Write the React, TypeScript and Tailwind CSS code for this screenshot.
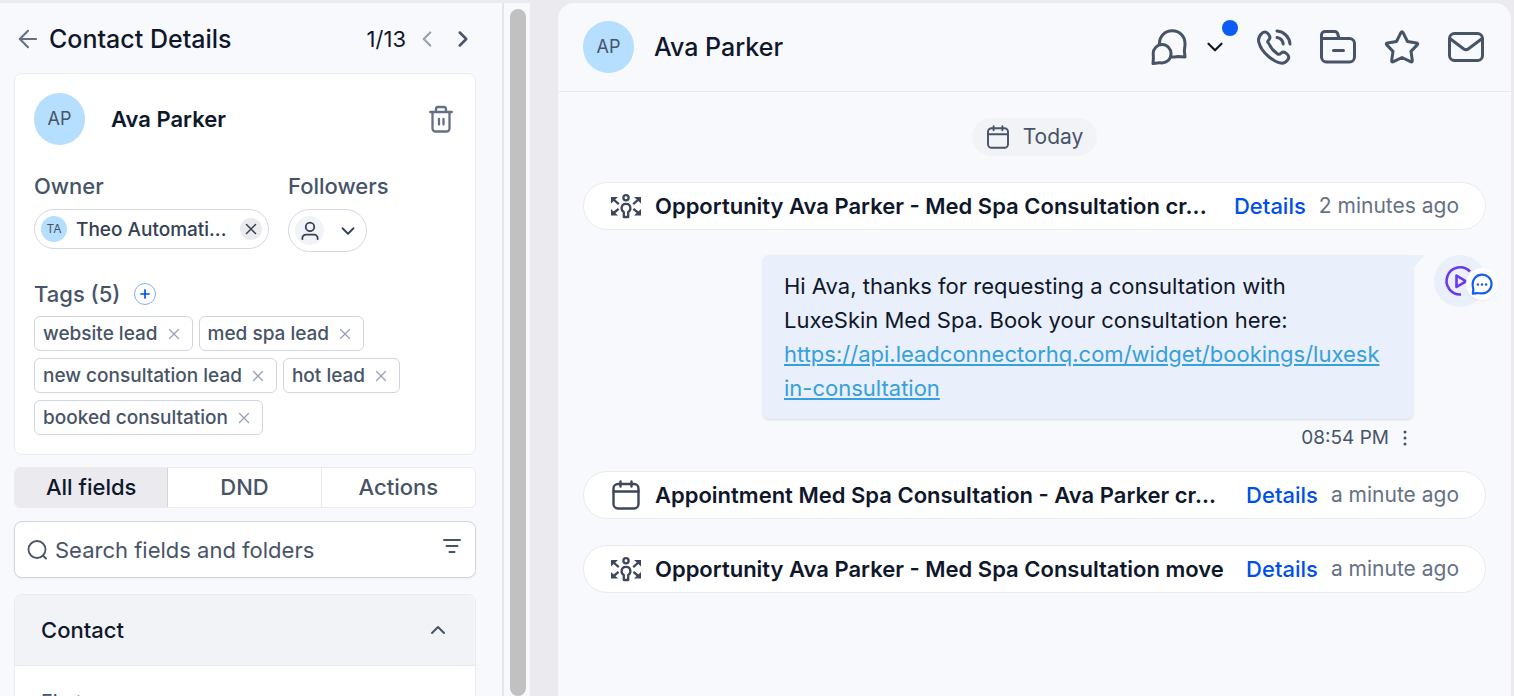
import React from 'react';
import { ArrowLeft, ChevronDown, ChevronLeft, ChevronRight, ChevronUp, Plus, X } from 'lucide-react';

interface ActivityItem {
  id: number;
  kind: 'opportunity' | 'appointment';
  title: string;
  time: string;
}

const tags = ['website lead', 'med spa lead', 'new consultation lead', 'hot lead', 'booked consultation'];

const CalendarIcon = ({ className }: { className: string }) => (
  <svg viewBox="0 0 28 30" fill="none" stroke="currentColor" strokeWidth="2.4" strokeLinecap="round" className={className}>
    <rect x="1.5" y="4" width="25" height="24.5" rx="4.5" />
    <path d="M1.5 11.5h25M8.5 1.5v5M19.5 1.5v5" />
  </svg>
);

const OpportunityIcon = () => (
  <svg viewBox="0 0 32 26" fill="none" stroke="currentColor" strokeWidth="2.3" className="h-[26px] w-8">
    <circle cx="16" cy="4.7" r="2.6" />
    <path strokeLinejoin="round" d="M13.8 24v-5c-1.400-.7-2.200-1.900-2.200-3.700 0-2.900 1.500-4.500 4.400-4.500s4.400 1.600 4.400 4.500c0 1.800-.8 3-2.200 3.700v5z" />
    <path d="M3 6l5.800 5.200M29 6l-5.800 5.200M3 20.500l5.600-4.700M29 20.500l-5.600-4.700" />
    <path
      fill="currentColor"
      stroke="none"
      d="M1 4h7L1 10.500zM31 4h-7l7 6.500zM1 22.500h7L1 16zM31 22.500h-7l7-6.500z"
    />
  </svg>
);

const ActivityRow: React.FC<{ item: ActivityItem }> = ({ item }) => (
  <div className="flex h-12 items-center rounded-full border border-[#eaeaef] bg-white px-[26px]">
    <span className="flex w-8 shrink-0 justify-center text-[#3d465a]">
      {item.kind === 'opportunity' ? <OpportunityIcon /> : <CalendarIcon className="h-[30px] w-7" />}
    </span>
    <p className="ml-[13px] min-w-0 flex-1 overflow-hidden text-[22px] font-semibold whitespace-nowrap text-[#0f172a]">{item.title}</p>
    <a href="#details" className="ml-3 text-[22px] font-medium text-[#004eeb]">Details</a>
    <span className="ml-[13px] text-[21px] whitespace-nowrap text-[#667085]">{item.time}</span>
  </div>
);

const ContactPanel = () => (
  <aside className="w-[502px] shrink-0 bg-[#f8f9fd] pr-[26px] pl-3.5">
    <header className="flex h-[70px] items-center pt-0.5">
      <button aria-label="Back" className="text-[#667085]">
        <ArrowLeft className="h-7 w-7" strokeWidth={1.8} />
      </button>
      <h1 className="ml-[7px] pt-0.5 text-[25px] font-medium text-[#0f172a]">Contact Details</h1>
      <span className="ml-auto text-[22px] text-[#0f172a]">1/13</span>
      <button aria-label="Previous contact" className="ml-2 text-[#98a2b3]">
        <ChevronLeft className="h-[26px] w-[26px]" />
      </button>
      <button aria-label="Next contact" className="ml-2.5 text-[#475467]">
        <ChevronRight className="h-[26px] w-[26px]" strokeWidth={2.3} />
      </button>
    </header>

    <section className="h-[382px] rounded-lg border border-[#eaeaef] bg-white p-[19px]">
      <div className="flex items-center">
        <div className="flex h-[52px] w-[51px] items-center justify-center rounded-full bg-[#b5deff] text-lg text-[#475467]">AP</div>
        <h2 className="ml-[26px] text-[22px] font-semibold text-[#0f172a]">Ava Parker</h2>
        <button aria-label="Delete contact" className="mr-[3px] ml-auto text-[#667085]">
          <svg viewBox="0 0 24 28" fill="none" stroke="currentColor" strokeWidth="2.3" strokeLinecap="round" strokeLinejoin="round" className="h-7 w-6">
            <path d="M1.2 7h21.600M3.500 7v16.500A3 3 0 0 0 6.500 26.500h11a3 3 0 0 0 3-3V7M7 6.500V4.200A2.200 2.200 0 0 1 9.200 2h5.600a2.200 2.200 0 0 1 2.200 2.200v2.300M10 14v5.500M14.500 14v5.500" />
          </svg>
        </button>
      </div>

      <div className="mt-[27px] flex">
        <div className="w-[254px]">
          <h3 className="text-[22px] leading-7 font-medium text-[#475467]">Owner</h3>
          <div className="mt-[9px] flex h-10 w-[235px] items-center rounded-full border border-[#d5d7e2] pl-1.5">
            <span className="flex h-[26px] w-[26px] items-center justify-center rounded-full bg-[#b5deff] text-xs text-[#475467]">TA</span>
            <span className="ml-[9px] pt-0.5 text-[19px] font-medium text-[#344054]">Theo Automati...</span>
            <button aria-label="Remove owner" className="mr-1.5 ml-auto flex h-[22px] w-[22px] items-center justify-center rounded-full bg-[#ebebef] text-[#344054]">
              <X className="h-[18px] w-[18px]" />
            </button>
          </div>
        </div>
        <div>
          <h3 className="text-[22px] leading-7 font-medium text-[#475467]">Followers</h3>
          <button aria-label="Choose followers" className="mt-[9px] flex h-[43px] w-[79px] items-center rounded-full border border-[#d5d7e2] pl-1.5 text-[#344054]">
            <span className="flex h-[29px] w-[29px] items-center justify-center rounded-full bg-[#f2f3f7]">
              <svg viewBox="0 0 20 22" fill="none" stroke="currentColor" strokeWidth="2" strokeLinecap="round" className="h-5 w-[18px]">
                <circle cx="10" cy="6.500" r="4.700" />
                <path d="M1.500 20v-1a4 4 0 0 1 4-4h9a4 4 0 0 1 4 4v1" />
              </svg>
            </span>
            <ChevronDown className="ml-[13px] h-[22px] w-[22px]" />
          </button>
        </div>
      </div>

      <div className="mt-7 flex h-7 items-center">
        <h3 className="text-[22px] font-medium text-[#475467]">Tags (5)</h3>
        <button aria-label="Add tag" className="ml-3.5 flex h-[22px] w-[22px] items-center justify-center rounded-full border border-[#84adff] text-[#004eeb]">
          <Plus className="h-3.5 w-3.5" strokeWidth={2.8} />
        </button>
      </div>
      <ul className="mt-2 flex flex-wrap gap-x-1.5 gap-y-[7px]">
        {tags.map((tag) => (
          <li key={tag} className="flex h-[35px] items-center rounded-md border border-[#d0d5dd] pt-0.5 pr-[9px] pl-2 text-[19px] font-medium text-[#475467]">
            {tag}
            <button aria-label={`Remove ${tag}`} className="mb-0.5 ml-[7px] text-[#98a2b3]">
              <X className="h-[18px] w-[18px]" strokeWidth={1.7} />
            </button>
          </li>
        ))}
      </ul>
    </section>

    <div role="tablist" className="mt-3 grid h-[41px] grid-cols-3 overflow-hidden rounded-md border border-[#eaeaef] bg-white text-[22px] font-medium text-[#475467]">
      <button role="tab" aria-selected="true" className="border-r border-[#d0d5dd] bg-[#ebebef] text-[#0f172a]">All fields</button>
      <button role="tab" aria-selected="false" className="border-r border-[#eaeaef]">DND</button>
      <button role="tab" aria-selected="false">Actions</button>
    </div>

    <div className="mt-[13px] flex h-[57px] items-center rounded-lg border border-[#d0d5dd] bg-white pr-[13px] pl-3 shadow-xs">
      <svg viewBox="0 0 20 20" fill="none" stroke="#475467" strokeWidth="1.8" strokeLinecap="round" className="h-5 w-5 shrink-0">
        <circle cx="10" cy="9.500" r="8.500" />
        <path d="M16 15.500l3 3" />
      </svg>
      <input type="text" aria-label="Search fields and folders" placeholder="Search fields and folders" className="ml-2 min-w-0 flex-1 pt-0.5 text-[22px] text-[#344054] outline-none placeholder:text-[#475467]" />
      <button aria-label="Filter fields" className="mb-2 text-[#475467]">
        <svg viewBox="0 0 20 16" fill="none" stroke="currentColor" strokeWidth="2" strokeLinecap="round" className="h-4 w-5">
          <path d="M2 2h16M4.500 8h11M7.500 14h5" />
        </svg>
      </button>
    </div>

    <section className="mt-4 rounded-t-lg border border-[#eaeaef] bg-white">
      <button className="flex h-[71px] w-full items-center justify-between rounded-t-lg border-b border-[#eaeaef] bg-[#f2f3f7] pr-[25px] pl-[26px] text-[22px] font-medium text-[#0f172a]">
        Contact
        <ChevronUp className="h-6 w-6 text-[#475467]" />
      </button>
      <label htmlFor="first-name" className="mt-[22px] block pl-[26px] text-xl text-[#475467]">First name</label>
      <input id="first-name" type="text" className="mx-[26px] h-12 rounded-lg border border-[#d0d5dd]" />
    </section>
  </aside>
);

const HeaderActions = () => (
  <div className="ml-auto flex items-center text-[#475467]">
    <button aria-label="Conversations">
      <svg viewBox="0 0 36 36" fill="none" stroke="currentColor" strokeWidth="3" strokeLinecap="round" strokeLinejoin="round" className="h-9 w-9">
        <path d="M8.500 15.500v-1C8.500 7 14 1.800 21.200 1.800S34 7.200 34 14.500c0 3.500-.6 5.500-.6 7.500l.6 6-7-.5c-2 .1-4 .8-7 .2" />
        <path d="M2 34.500l.4-5.500c0-2-.2-2.500-.2-4.500A9 9 0 0 1 11 15.500a9 9 0 0 1 9 9.200c0 5.300-3.900 9.200-9 9.200-2 0-3-.2-4.500 0z" />
      </svg>
    </button>
    <button aria-label="Conversation options" className="relative ml-[15px] text-[#0f172a]">
      <ChevronDown className="h-[26px] w-[26px]" />
      <span className="absolute -top-3.5 left-5 h-4 w-4 rounded-full bg-[#0a5cf5]"></span>
    </button>
    <button aria-label="Call" className="ml-7">
      <svg viewBox="0 0 36 36" fill="none" stroke="currentColor" strokeWidth="3" strokeLinecap="round" strokeLinejoin="round" className="h-9 w-9">
        <path d="M21 8.500a7.500 7.500 0 0 1 6.200 6.500M21 2a14 14 0 0 1 13 13" />
        <path d="M12.800 14.500c-1.300-1.200-1.700-2 .1-3.700 2.100-2 .9-4.100-.8-6.100-1.900-2.200-4.200-2.400-6.200-.4-3.300 3-3.900 5.600-3.100 8.900 1.200 5 4.800 10.200 9.700 14.300 4.500 3.700 9.300 6.600 13.500 6.700 2.200 0 4.100-1.300 5.700-3.400 1.500-1.900 1.200-4.100-.7-5.800-2.100-1.800-4.200-2.800-6.100-.8-1.800 1.900-2.600 1.200-3.800.4-3.500-2.400-6.200-5.500-8.300-10.100z" />
      </svg>
    </button>
    <button aria-label="Move to folder" className="ml-7">
      <svg viewBox="0 0 36 34" fill="none" stroke="currentColor" strokeWidth="3" strokeLinecap="round" strokeLinejoin="round" className="h-[34px] w-9">
        <path d="M1.500 9V5A3.500 3.500 0 0 1 5 1.500h9.500A3.500 3.500 0 0 1 18 5l1 3.500M1.500 8.500H29.500a5 5 0 0 1 5 5V27a5 5 0 0 1-5 5h-23a5 5 0 0 1-5-5zM13.500 20.500h10" />
      </svg>
    </button>
    <button aria-label="Star conversation" className="ml-7">
      <svg viewBox="0 0 36 34" fill="none" stroke="currentColor" strokeWidth="3" strokeLinejoin="round" className="h-[34px] w-9">
        <path d="M16.800 2.800q1.200-1.900 2.400 0l4.300 8.700 9 1.500q2 .4.700 1.900l-6.200 6.500 1.300 9q.2 2.200-1.800 1.300L18 27.500l-8.500 4.200q-2 .9-1.800-1.300l1.300-9-6.200-6.500q-1.300-1.500.7-1.900l9-1.500z" />
      </svg>
    </button>
    <button aria-label="Mark as unread" className="ml-7">
      <svg viewBox="0 0 36 30" fill="none" stroke="currentColor" strokeWidth="3" strokeLinecap="round" strokeLinejoin="round" className="h-[30px] w-9">
        <rect x="1.500" y="1.500" width="33" height="27" rx="5" />
        <path d="M2.500 7l13.300 10q2.200 1.600 4.400 0L33.500 7" />
      </svg>
    </button>
  </div>
);

const MessageBubble = () => (
  <div className="flex justify-end">
    <div>
      <div className="relative w-[650px] rounded-md bg-[#e9effb] py-3.5 pr-5 pl-[21px] text-[22px] leading-[34px] text-[#0f172a] shadow-sm">
        <p>
          Hi Ava, thanks for requesting a consultation with
          <br />
          LuxeSkin Med Spa. Book your consultation here:
          <br />
          <a href="#booking" className="break-all text-[#36a0dc] underline">
            https://api.leadconnectorhq.com/widget/bookings/luxesk
            <br />
            in-consultation
          </a>
        </p>
        <svg viewBox="0 0 24 15" className="absolute top-0 -right-3 h-[15px] w-6" fill="#e9effb">
          <path d="M0 0h24L12 13v2H0z" />
        </svg>
      </div>
      <div className="mt-[5px] flex h-7 items-center justify-end text-[19px] text-[#475467]">
        08:54 PM
        <button aria-label="Message options" className="ml-2">
          <svg viewBox="0 0 16 16" fill="currentColor" className="h-4 w-4">
            <circle cx="8" cy="2" r="1.500" />
            <circle cx="8" cy="8" r="1.500" />
            <circle cx="8" cy="14" r="1.500" />
          </svg>
        </button>
      </div>
    </div>
    <div className="relative ml-[21px] h-[52px] w-[52px] rounded-full bg-[#e9effb]">
      <svg viewBox="0 0 52 52" fill="none" stroke="#6938ef" className="h-[52px] w-[52px]">
        <path d="M27 39.500A13.600 13.600 0 1 1 36 16.500" strokeWidth="2.600" />
        <path d="M22.500 20.500v11.500l9.500-5.700z" strokeWidth="2.600" strokeLinejoin="round" />
      </svg>
      <span className="absolute top-[13px] left-8 flex h-8 w-8 items-center justify-center rounded-full bg-white shadow-xs">
        <svg viewBox="0 0 24 24" fill="none" stroke="#155eef" strokeWidth="2.400" strokeLinecap="round" strokeLinejoin="round" className="h-[22px] w-[22px]">
          <path d="M2 22.500l.6-5C2 16 1.800 14 1.800 12.300A10.300 10.300 0 1 1 12 22.300c-2 0-4-.3-5-.3z" />
          <path d="M7.500 12.500h.01M12 12.500h.01M16.500 12.500h.01" strokeWidth="2.800" />
        </svg>
      </span>
    </div>
  </div>
);

const ConversationPanel = () => (
  <main className="mr-[3px] ml-7 min-w-0 flex-1 rounded-t-2xl bg-[#f8f9fd]">
    <header className="flex h-[89px] items-center border-b border-[#eaeaef] pr-[27px] pl-[25px]">
      <div className="flex h-[52px] w-[51px] items-center justify-center rounded-full bg-[#b5deff] text-lg text-[#475467]">AP</div>
      <h2 className="ml-5 pt-0.5 text-[25px] font-medium text-[#0f172a]">Ava Parker</h2>
      <HeaderActions />
    </header>
    <div className="flex flex-col px-[25px] pt-[26px]">
      <div className="flex h-[38px] items-center self-center rounded-full bg-[#f2f3f7] px-3.5 text-[21px] text-[#475467]">
        <CalendarIcon className="mr-[13px] h-6 w-6" />
        Today
      </div>
      <div className="mt-[26px]">
        <ActivityRow item={{ id: 1, kind: 'opportunity', title: 'Opportunity Ava Parker - Med Spa Consultation cr...', time: '2 minutes ago' }} />
      </div>
      <div className="mt-[25px] mb-[19px]">
        <MessageBubble />
      </div>
      <div className="flex flex-col gap-[26px]">
        <ActivityRow item={{ id: 2, kind: 'appointment', title: 'Appointment Med Spa Consultation - Ava Parker cr...', time: 'a minute ago' }} />
        <ActivityRow item={{ id: 3, kind: 'opportunity', title: 'Opportunity Ava Parker - Med Spa Consultation move', time: 'a minute ago' }} />
      </div>
    </div>
  </main>
);

export default function App() {
  return (
    <div className="flex h-screen overflow-hidden bg-[#ebebef] pt-[3px] font-['Inter',sans-serif]">
      <ContactPanel />
      <div className="flex w-7 shrink-0 justify-center border-l-2 border-[#e4e4ea] bg-[#f8f9fd] pt-1.5 pl-0.5">
        <div className="h-full w-4 rounded-full bg-[#c1c1c1]"></div>
      </div>
      <ConversationPanel />
    </div>
  );
}
